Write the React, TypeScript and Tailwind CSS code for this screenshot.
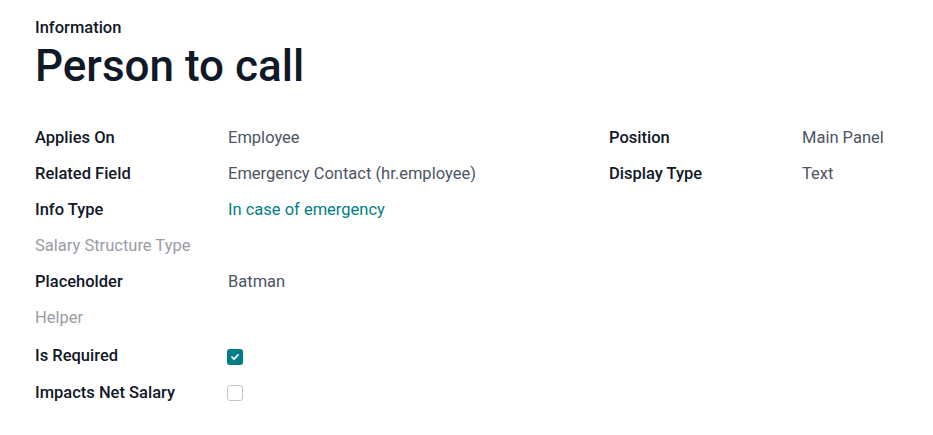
const leftRows: { label: string; value?: string; kind?: "text" | "link" | "muted" | "check" | "uncheck" }[] = [
  { label: "Applies On", value: "Employee" },
  { label: "Related Field", value: "Emergency Contact (hr.employee)" },
  { label: "Info Type", value: "In case of emergency", kind: "link" },
  { label: "Salary Structure Type", kind: "muted" },
  { label: "Placeholder", value: "Batman" },
  { label: "Helper", kind: "muted" },
  { label: "Is Required", kind: "check" },
  { label: "Impacts Net Salary", kind: "uncheck" },
];

const rightRows = [
  { label: "Position", value: "Main Panel" },
  { label: "Display Type", value: "Text" },
];

function Row({ label, value, kind = "text" }: { label: string; value?: string; kind?: string }) {
  return (
    <div className={kind === "check" ? "mt-[2px] flex h-[37px] items-center" : "flex h-[36px] items-center"}>
      <div
        className={
          kind === "muted"
            ? "w-[193px] shrink-0 text-[#9a9ca5]"
            : "w-[193px] shrink-0 font-medium text-[#111827]"
        }
      >
        {label}
      </div>
      <div className="flex-1">
        {kind === "check" && (
          <span className="-ml-px flex h-[16px] w-[16px] items-center justify-center rounded-[3px] bg-[#017e84]">
            <svg width="10" height="10" viewBox="0 0 10 10" fill="none">
              <path d="M2 5.2 L4.1 7.2 L8 2.9" stroke="white" strokeWidth="1.8" strokeLinecap="round" strokeLinejoin="round" />
            </svg>
          </span>
        )}
        {kind === "uncheck" && (
          <span className="-ml-px block h-[16px] w-[16px] rounded-[3px] border border-[#c4c6cb] bg-white" />
        )}
        {kind === "link" && <span className="text-[#017e84]">{value}</span>}
        {kind === "text" && value && <span className="text-[#4b5563]">{value}</span>}
      </div>
    </div>
  );
}

export default function App() {
  return (
    <div
      className="min-h-screen bg-white px-[35px] pt-[18px] text-[16.5px]"
      style={{ fontFamily: "Roboto, 'Liberation Sans', sans-serif" }}
    >
      <div className="text-[16.5px] font-medium leading-5 text-[#111827]">Information</div>
      <h1 className="mt-[3px] text-[44px] font-medium leading-[50px] text-[#111827]">Person to call</h1>

      <div className="mt-[29px] grid grid-cols-[574px_1fr]">
        <div className="flex flex-col">
          {leftRows.map((r) => (
            <Row key={r.label} {...r} />
          ))}
        </div>
        <div className="flex flex-col">
          {rightRows.map((r) => (
            <Row key={r.label} {...r} />
          ))}
        </div>
      </div>
    </div>
  );
}
